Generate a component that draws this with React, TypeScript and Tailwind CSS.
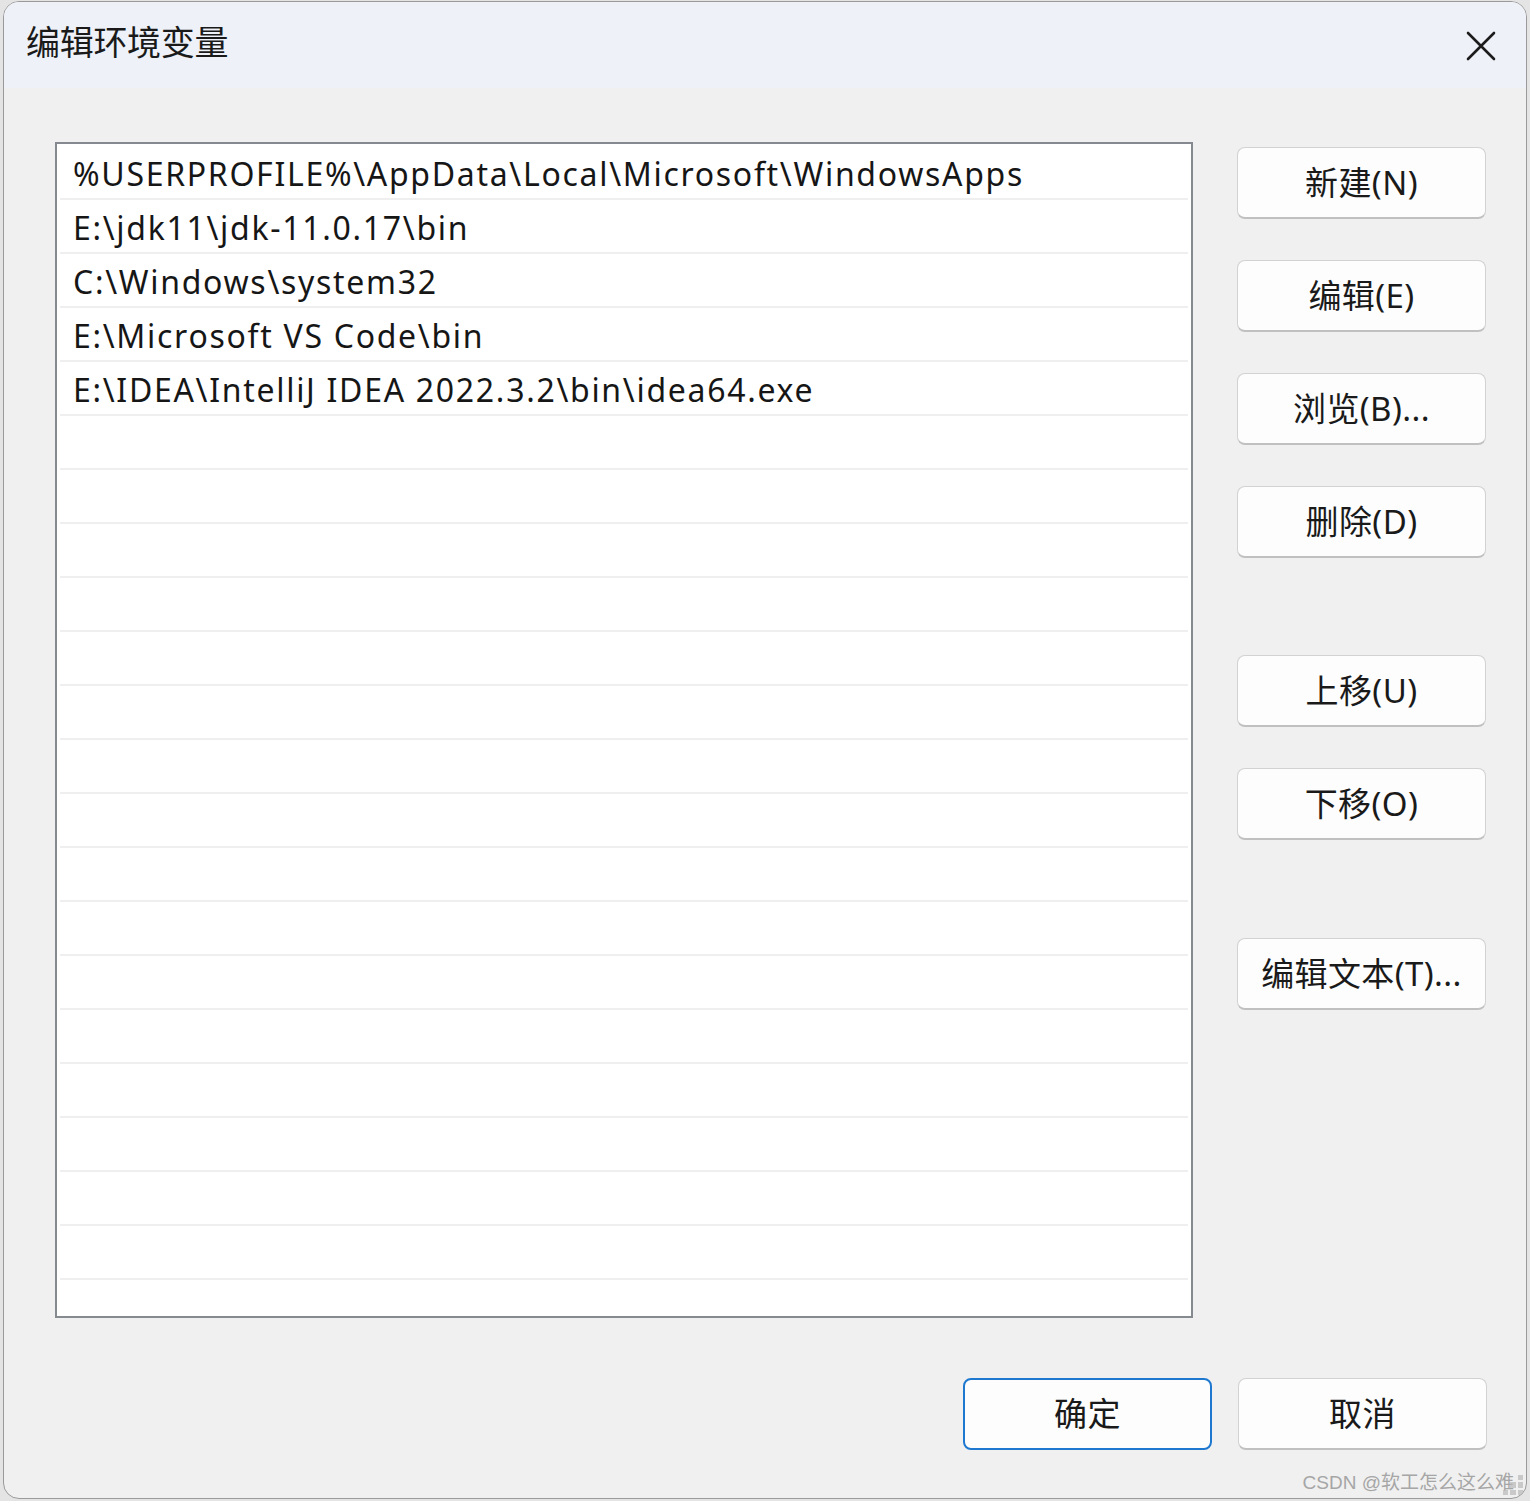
import React from "react";

const FONT = '"Noto Sans", "Noto Sans CJK SC", sans-serif';

const paths = [
  "%USERPROFILE%\\AppData\\Local\\Microsoft\\WindowsApps",
  "E:\\jdk11\\jdk-11.0.17\\bin",
  "C:\\Windows\\system32",
  "E:\\Microsoft VS Code\\bin",
  "E:\\IDEA\\IntelliJ IDEA 2022.3.2\\bin\\idea64.exe",
];

function Btn({ label, primary }: { label: string; primary?: boolean }) {
  return (
    <button
      className={
        primary
          ? "w-[249px] h-[72px] rounded-[8px] border-2 border-[#1e78d0] bg-[#fdfdfd] text-[33px] tracking-[0.4px] text-[#1a1a1a] flex items-center justify-center"
          : "w-[249px] h-[72px] rounded-[8px] border border-[#d2d2d2] border-b-[#c0c0c0] border-b-2 bg-[#fdfdfd] text-[33px] tracking-[0.4px] text-[#1a1a1a] flex items-center justify-center"
      }
      style={{ fontFamily: FONT }}
    >
      {label}
    </button>
  );
}

export default function App() {
  const rows = Array.from({ length: 22 }, (_, i) => paths[i] ?? "");
  return (
    <div className="w-[1530px] h-[1501px] bg-[#e4e4e4] pl-[3px] pr-[3px] pt-[1px] pb-[2px]" style={{ fontFamily: FONT }}>
      <div className="relative w-full h-full rounded-[16px] border border-[#9a9a9a] overflow-hidden flex flex-col bg-[#f0f0f0]">
        {/* Title bar */}
        <div className="h-[86px] bg-[#eef2f8] flex items-center justify-between pl-[22px] pr-[30px] shrink-0">
          <span className="text-[34px] text-[#1a1a1a] leading-none tracking-[-0.3px] mb-[6px]">编辑环境变量</span>
          <svg width="30" height="30" viewBox="0 0 30 30" className="mt-[2px]">
            <path d="M2 2 L28 28 M28 2 L2 28" stroke="#1c1c1c" strokeWidth="2.6" strokeLinecap="round" />
          </svg>
        </div>

        {/* Body */}
        <div className="flex-1 flex flex-col pl-[51px] pr-[39px] pt-[54px]">
          <div className="flex gap-[44px]">
            {/* List */}
            <div className="w-[1138px] h-[1176px] border-2 border-[#858a91] bg-white overflow-hidden flex flex-col pt-[2px]">
              {rows.map((t, i) => (
                <div
                  key={i}
                  className="h-[54px] shrink-0 mx-[3px] border-b-2 border-[#efefef] flex items-center pl-[13px] pt-[4px] text-[32px] tracking-[1.7px] text-[#161616] whitespace-nowrap"
                >
                  {t}
                </div>
              ))}
            </div>

            {/* Right buttons */}
            <div className="flex flex-col pt-[5px]">
              <Btn label="新建(N)" />
              <div className="h-[41px]" />
              <Btn label="编辑(E)" />
              <div className="h-[41px]" />
              <Btn label="浏览(B)..." />
              <div className="h-[41px]" />
              <Btn label="删除(D)" />
              <div className="h-[97px]" />
              <Btn label="上移(U)" />
              <div className="h-[41px]" />
              <Btn label="下移(O)" />
              <div className="h-[98px]" />
              <Btn label="编辑文本(T)..." />
            </div>
          </div>

          {/* Bottom buttons */}
          <div className="flex justify-end gap-[26px] mt-[60px]">
            <Btn label="确定" primary />
            <Btn label="取消" />
          </div>
        </div>

        {/* Watermark overlay */}
        <div className="absolute right-[12px] bottom-[6px] text-[19px] text-[#a6a6a6] leading-none whitespace-nowrap" style={{ fontFamily: '"Liberation Sans", "Noto Sans CJK SC", sans-serif' }}>
          CSDN @软工怎么这么难
        </div>
        {/* size grip */}
        <div className="absolute right-[3px] bottom-[3px] grid grid-cols-3 gap-[2px] w-[20px] h-[20px] opacity-70">
          <span />
          <span />
          <span className="bg-[#b8b8b8]" />
          <span />
          <span className="bg-[#b8b8b8]" />
          <span className="bg-[#b8b8b8]" />
          <span className="bg-[#b8b8b8]" />
          <span className="bg-[#b8b8b8]" />
          <span className="bg-[#b8b8b8]" />
        </div>
      </div>
    </div>
  );
}
